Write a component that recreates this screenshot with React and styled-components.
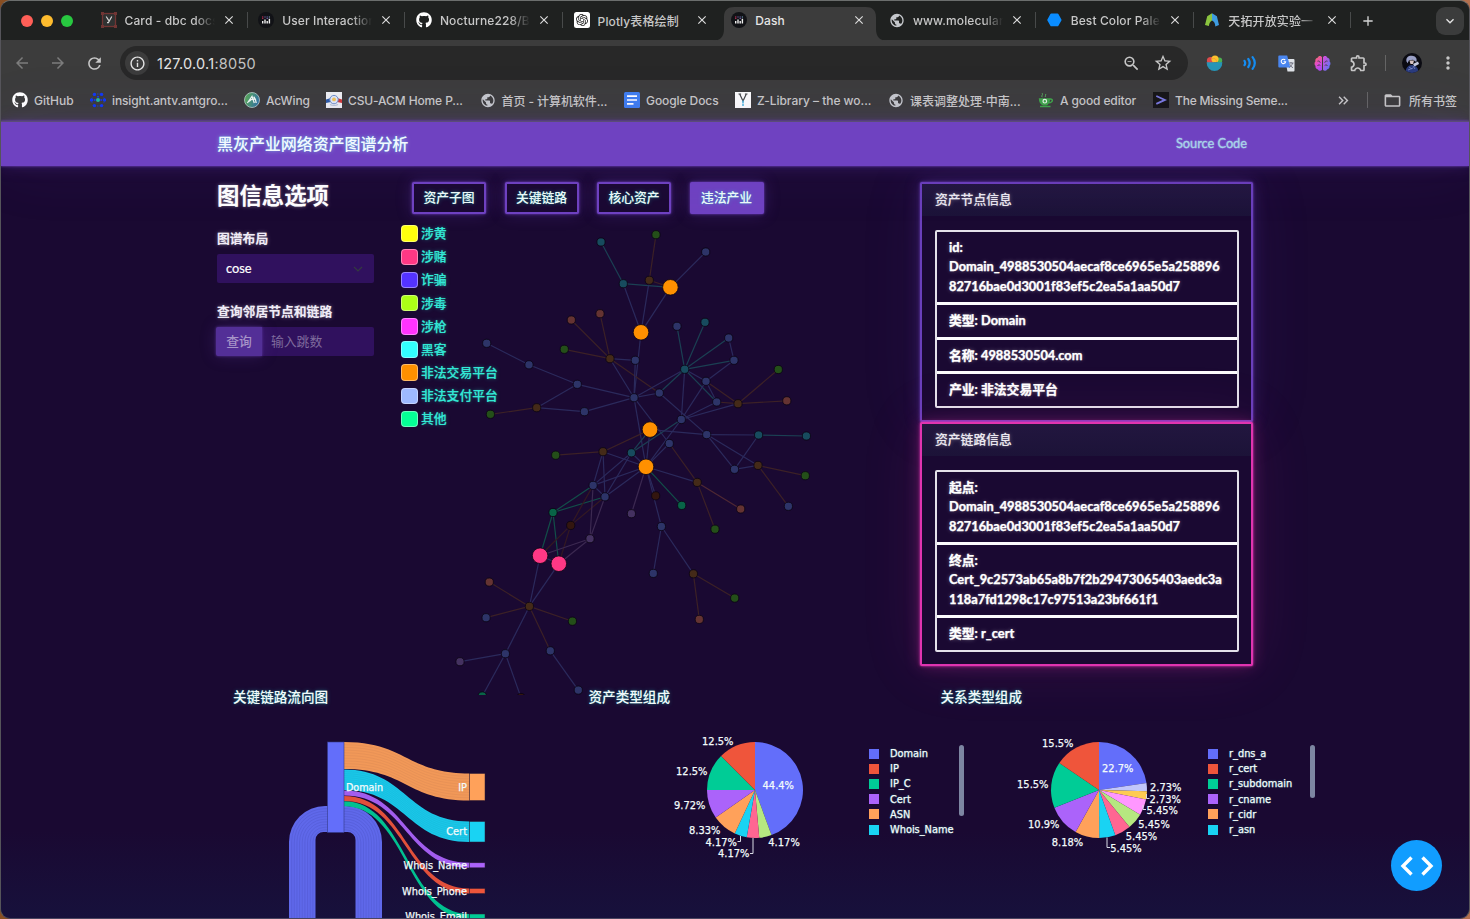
import React from 'react';
import styled, { createGlobalStyle, css } from 'styled-components';
import { FaGithub } from 'react-icons/fa';
import { SiOpenai } from 'react-icons/si';
import {
  MdArrowBack, MdArrowForward, MdRefresh, MdInfoOutline, MdZoomOut, MdStarBorder,
  MdOutlineExtension, MdMoreVert, MdClose, MdAdd, MdExpandMore, MdFolderOpen, MdPublic,
  MdKeyboardDoubleArrowRight,
} from 'react-icons/md';

const GlobalStyle = createGlobalStyle`
  *, *::before { box-sizing: border-box; }
  body { margin: 0; background: #2c211d; overflow: hidden; }
  button, input { font: inherit; }
`;

const uiFont = `Inter, "Noto Sans CJK SC", sans-serif`;
const pageFont = `Lato, "Noto Sans CJK SC", sans-serif`;

const Desktop = styled.div`
  width: 1470px;
  height: 919px;
  background: linear-gradient(90deg, #8a4f22, #3b2a22 30%, #3b2a22 70%, #b5704e);
`;

const Window = styled.div`
  position: relative;
  width: 1470px;
  height: 919px;
  display: flex;
  flex-direction: column;
  overflow: hidden;
  border: 1px solid #6b6e6d;
  border-color: #6b6e6d #55545a #4a4560 #55545a;
  border-radius: 10px;
  background: #3c3c3c;
  font-family: ${uiFont};
`;

/* ---------- browser chrome ---------- */

const TabStrip = styled.div`
  height: 39px;
  flex: none;
  display: flex;
  align-items: center;
  background: #1f2120;
`;

const Lights = styled.div`
  width: 91px;
  flex: none;
  padding-left: 20px;
  display: flex;
  gap: 8px;
`;

const Light = styled.i`
  width: 12px;
  height: 12px;
  border-radius: 50%;
  background: ${(p) => p.$color};
`;

const Tab = styled.div`
  position: relative;
  width: 157.7px;
  flex: none;
  height: 39px;
  padding: 0 0 1px 8.500px;
  display: flex;
  align-items: center;
  color: #c7c7c7;
  font-size: 12px;
  font-weight: 500;
`;

const TabShape = styled.svg`
  position: absolute;
  left: -11px;
  top: 5px;
  z-index: 0;
`;

const Favicon = styled.span`
  position: relative;
  width: 16px;
  height: 16px;
  flex: none;
  display: flex;
  align-items: center;
  justify-content: center;
`;

const TabTitle = styled.span`
  position: relative;
  width: 92px;
  margin-left: 8px;
  letter-spacing: 0.12px;
  overflow: hidden;
  white-space: nowrap;
  ${(p) => p.$fade && css`mask-image: linear-gradient(90deg, #000 70px, transparent 90px);`}
  ${(p) => p.$active && css`color: #e6e6e6;`}
`;

const TabClose = styled.span`
  position: relative;
  margin-left: 5px;
  display: flex;
  color: #dcdcdc;
`;

const TabDivider = styled.i`
  width: 1px;
  height: 16px;
  margin-left: 11px;
  background: #484a4a;
`;

const NewTab = styled.span`
  display: flex;
  margin-left: 6px;
  color: #d5d5d5;
`;

const TabSearch = styled.span`
  width: 28px;
  height: 28px;
  margin: 0 5px 0 auto;
  border-radius: 9px;
  background: #3b3c3c;
  color: #e3e3e3;
  display: flex;
  align-items: center;
  justify-content: center;
`;

const Toolbar = styled.div`
  height: 46px;
  flex: none;
  display: flex;
  align-items: center;
  padding-left: 11px;
  color: #c7c7c7;
`;

const ToolSlot = styled.span`
  width: ${(p) => p.$w}px;
  height: 24px;
  flex: none;
  display: flex;
  align-items: center;
  justify-content: center;
  color: ${(p) => p.$color || '#c7c7c7'};
`;

const NavButtons = styled.div`
  width: 108px;
  display: flex;
  gap: 16px;
`;

const Omnibox = styled.div`
  width: 1068px;
  height: 34px;
  padding: 0 7px 0 5px;
  display: flex;
  align-items: center;
  border-radius: 17px;
  background: #282828;
  color: #e3e3e3;
  font-size: 14.5px;
`;

const SiteInfo = styled.span`
  width: 24px;
  height: 24px;
  border-radius: 50%;
  background: #3c3c3c;
  display: flex;
  align-items: center;
  justify-content: center;
`;

const Url = styled.span`
  margin-left: 8px;
  flex: 1;
  letter-spacing: 0.25px;
  span { color: #c3c3c3; }
`;

const Extensions = styled.div`
  margin-left: 8px;
  display: flex;
  align-items: center;
`;

const Avatar = styled.span`
  width: 20px;
  height: 20px;
  border-radius: 50%;
  overflow: hidden;
  display: flex;
`;

const VRule = styled.i`
  width: 1px;
  height: 16px;
  background: #656565;
`;

const Bookmarks = styled.div`
  height: 35px;
  flex: none;
  display: flex;
  align-items: center;
  padding: 0 0 7px 11px;
  color: #c7c7c7;
  font-size: 12px;
  font-weight: 500;
`;

const Bookmark = styled.span`
  width: ${(p) => p.$w}px;
  flex: none;
  display: flex;
  align-items: center;
  gap: 6px;
  white-space: nowrap;
  letter-spacing: ${(p) => p.$ls || 0}px;
`;

const Overflow = styled.span`
  margin-left: 34px;
  display: flex;
`;

const AllBookmarks = styled.span`
  margin-left: 1px;
  display: flex;
  align-items: center;
  gap: 7px;
`;

/* ---------- page ---------- */

const Page = styled.div`
  flex: 1;
  display: flex;
  flex-direction: column;
  font-family: ${pageFont};
  font-size: 12.8px;
  line-height: 19.2px;
  color: #fff;
  background: linear-gradient(180deg, #1a0932 0, #1a0932 710px, #17113c 798px);
`;

const Navbar = styled.header`
  position: relative;
  height: 45px;
  flex: none;
  display: flex;
  align-items: center;
  justify-content: space-between;
  padding: 0 222px 0 216px;
  border-top: 1px solid #5b4c78;
  background: #6f42c1;
  box-shadow: 0 0 2px rgba(111, 66, 193, 0.9), 0 0 4px rgba(111, 66, 193, 0.4),
    0 0 16px rgba(111, 66, 193, 0.3), 0 0 64px rgba(111, 66, 193, 0.1);
`;

const Brand = styled.h1`
  margin: 0;
  font-size: 16px;
  font-weight: 500;
  letter-spacing: -0.06px;
  color: #f4f8ff;
  text-shadow: 0 0 1px rgba(50, 251, 226, 0.5), 0 0 4px rgba(160, 230, 255, 0.6);
`;

const SourceLink = styled.a`
  color: #a9d3ea;
  letter-spacing: -0.03px;
  -webkit-text-stroke: 0.3px #a9d3ea;
  text-shadow: 0 0 2px rgba(169, 211, 234, 0.6);
`;

const Main = styled.main`
  height: 514px;
  flex: none;
  display: grid;
  grid-template-columns: 184px 519px 333px;
  padding: 16px 0 0 216px;
`;

const glow = css`text-shadow: 0 0 1px rgba(255, 255, 255, 0.4), 0 0 4px rgba(255, 255, 255, 0.35);`;

const Options = styled.section`
  width: 157px;
`;

const OptionsTitle = styled.h2`
  margin: 0;
  font-size: 22.4px;
  line-height: 28px;
  font-weight: 700;
  ${glow}
`;

const FieldLabel = styled.label`
  display: block;
  margin-top: ${(p) => p.$top}px;
  font-weight: 700;
  white-space: nowrap;
  color: #f0ecf7;
  ${glow}
`;

const Select = styled.div`
  height: 29px;
  margin-top: 6px;
  padding: 0 11px 0 9px;
  display: flex;
  align-items: center;
  justify-content: space-between;
  border-radius: 2px;
  background: #30115e;
  -webkit-text-stroke: 0.2px #fff;
`;

const InputGroup = styled.div`
  height: 29px;
  margin-top: 6px;
  display: flex;
  border-radius: 2px;
  background: #30115e;
`;

const QueryButton = styled.button`
  width: 46px;
  margin-left: -1px;
  padding: 0;
  border: 0;
  border-radius: 2px 0 0 2px;
  background: #532f97;
  color: #a795c8;
  font-weight: 500;
  box-shadow: 0 0 3px rgba(111, 66, 193, 0.7), 0 0 16px rgba(111, 66, 193, 0.25);
`;

const HopInput = styled.input`
  width: 111px;
  padding: 0 9px;
  border: 0;
  background: transparent;
  &::placeholder { color: #7f6b9d; opacity: 1; }
`;

const GraphArea = styled.section`
  display: flex;
  flex-direction: column;
`;

const ButtonRow = styled.div`
  display: flex;
  gap: 18.5px;
  margin: 0 0 7px 11px;
`;

const ViewButton = styled.button`
  width: 74px;
  height: 32px;
  padding: 0;
  border: 2px solid #6f42c1;
  border-radius: 2px;
  background: ${(p) => (p.$active ? '#6f42c1' : '#1a0932')};
  color: #eefaf8;
  font-weight: 500;
  text-shadow: 0 0 1px rgba(50, 251, 226, 0.5), 0 0 4px rgba(50, 251, 226, 0.35);
  box-shadow: 0 0 2px rgba(111, 66, 193, 0.9), 0 0 4px rgba(111, 66, 193, 0.4),
    0 0 16px rgba(111, 66, 193, 0.3);
`;

const GraphStage = styled.div`
  position: relative;
  height: 459px;
`;

const GraphSvg = styled.svg`
  display: block;
`;

const CategoryLegend = styled.ul`
  position: absolute;
  left: 0;
  top: 1px;
  margin: 0;
  padding: 0;
  list-style: none;
`;

const Category = styled.li`
  height: 23.2px;
  display: flex;
  align-items: center;
  gap: 3.5px;
  font-weight: 500;
  color: #32e8d5;
  text-shadow: 0 0 1px rgba(50, 251, 226, 0.5), 0 0 4px rgba(50, 251, 226, 0.35);
  white-space: nowrap;
  &::before {
    content: '';
    width: 16.5px;
    height: 16.5px;
    border-radius: 4px;
    border: 1px solid rgba(255, 255, 255, 0.4);
    background: ${(p) => p.$color};
  }
`;

const InfoColumn = styled.aside`
  display: flex;
  flex-direction: column;
`;

const InfoCard = styled.section`
  height: ${(p) => p.$h}px;
  flex: none;
  border: 2px solid ${(p) => (p.$pink ? '#e034b0' : '#6a3fbb')};
  border-radius: 2px;
  background: #1a0932;
  box-shadow: ${(p) => (p.$pink
    ? '0 0 2px rgba(234,57,184,.9), 0 0 4px rgba(234,57,184,.4), 0 0 16px rgba(234,57,184,.3), 0 0 64px rgba(234,57,184,.1)'
    : '0 0 2px rgba(111,66,193,.9), 0 0 4px rgba(111,66,193,.4), 0 0 16px rgba(111,66,193,.3), 0 0 64px rgba(111,66,193,.1)')};
`;

const CardHeader = styled.header`
  height: 32px;
  padding: 0 13px;
  display: flex;
  align-items: center;
  background: linear-gradient(180deg, #22163f, #1c1338);
  color: #ebe8f0;
  font-weight: 500;
  ${glow}
`;

const FactList = styled.ul`
  margin: 14px 12px 0 13px;
  padding: 0;
  list-style: none;
  border: 2px solid #e4e1ea;
  border-radius: 2px;
`;

const Fact = styled.li`
  padding: 6.2px 10px 6.2px 12px;
  font-weight: 700;
  white-space: pre-line;
  -webkit-text-stroke: 0.25px #fff;
  ${glow}
  & + & { border-top: 3px solid #fbfafc; }
`;

const Charts = styled.section`
  display: grid;
  grid-template-columns: 355.5px 352px 1fr;
  padding-left: 216px;
`;

const ChartPanel = styled.section`
  padding-left: 16px;
  padding-top: 7px;
`;

const ChartTitle = styled.h3`
  margin: 0;
  height: 20px;
  font-size: 13.6px;
  line-height: 20px;
  font-weight: 500;
  color: #f2f8fa;
  text-shadow: 0 0 1px rgba(50, 251, 226, 0.5), 0 0 4px rgba(50, 251, 226, 0.35);
`;

const PlotRow = styled.div`
  display: flex;
  padding-left: ${(p) => p.$left}px;
  padding-top: ${(p) => p.$top || 0}px;
`;

const PlotSvg = styled.svg`
  display: block;
  flex: none;
  text {
    font-family: "DejaVu Sans", sans-serif;
    fill: #f3fbfb;
    stroke: #f3fbfb;
    stroke-width: 0.25px;
  }
`;

const SeriesLegend = styled.ul`
  width: ${(p) => p.$w}px;
  flex: none;
  margin: 21px 0 0 ${(p) => p.$left}px;
  padding: 0;
  list-style: none;
`;

const Series = styled.li`
  height: 15.2px;
  display: flex;
  align-items: center;
  gap: 11px;
  font-family: "DejaVu Sans", sans-serif;
  font-size: 9.8px;
  color: #f3fbfb;
  -webkit-text-stroke: 0.25px #f3fbfb;
  text-shadow: 0 0 2px rgba(50, 251, 226, 0.4);
  &::before {
    content: '';
    width: 10px;
    height: 10px;
    background: ${(p) => p.$color};
  }
`;

const LegendScroll = styled.i`
  width: 5px;
  flex: none;
  height: ${(p) => p.$h}px;
  margin-top: 20px;
  border-radius: 3px;
  background: #7d86a2;
`;

const DevButton = styled.button`
  position: absolute;
  right: 27px;
  bottom: 27px;
  width: 51px;
  height: 51px;
  padding: 0;
  border: 0;
  border-radius: 50%;
  background: #119dff;
  display: flex;
  align-items: center;
  justify-content: center;
`;

/* ---------- icons ---------- */

const GlobeIcon = () => <MdPublic size={17} color="#c4c7cb" />;

const FrameIcon = () => (
  <svg width="16" height="16" viewBox="0 0 16 16">
    <rect x="1.5" y="1.5" width="13" height="13" fill="#303232" stroke="#713534" strokeWidth="1.3" />
    {[[0, 0], [13, 0], [0, 13], [13, 13]].map(([x, y]) => (
      <rect key={`${x}-${y}`} x={x} y={y} width="3" height="3" fill="#713534" />
    ))}
    <path d="M5.2 4.5 7.8 8.6M10.8 4.5 7.4 10.6H6" stroke="#d0d0d0" strokeWidth="1.2" fill="none" />
  </svg>
);

const DashIcon = () => (
  <svg width="16" height="16" viewBox="0 0 16 16">
    <circle cx="8" cy="8" r="8" fill="#111216" />
    <path d="M4.7 11.6V9M7 11.6V7.5M9.2 11.6V9M11.4 11.6V6.8" stroke="#eee" strokeWidth="1.4" />
    <path d="M4.7 4.4v2.4" stroke="#db3660" strokeWidth="1.3" strokeDasharray="1 .6" />
    <path d="M7 4.4v1.6M9.2 4.4v2.6" stroke="#7c6eb8" strokeWidth="1.2" strokeDasharray="1 .6" />
    <path d="M11.4 4.4v1" stroke="#78a8c8" strokeWidth="1.2" />
  </svg>
);

const ChatIcon = () => (
  <svg width="16" height="16" viewBox="0 0 16 16">
    <rect width="16" height="16" rx="2.5" fill="#fff" />
    <SiOpenai x="2" y="2" size={12} color="#1b1b1b" />
  </svg>
);

const HexIcon = () => (
  <svg width="15" height="14" viewBox="0 0 15 14">
    <path d="M4.3.6h6.2a1 1 0 0 1 .9.5l3 5.3a1 1 0 0 1 0 1l-3 5.4a1 1 0 0 1-.9.5H4.3a1 1 0 0 1-.9-.5l-3-5.4a1 1 0 0 1 0-1l3-5.3a1 1 0 0 1 .9-.5Z" fill="#0a8cff" />
  </svg>
);

const GateIcon = () => (
  <svg width="16" height="16" viewBox="0 0 16 16">
    <path d="M8 1.2v7.3C6 9.5 5.2 11.4 4.9 14L1 13l2.2-8.8Z" fill="#8bc53f" />
    <path d="M8 1.2 12.900 4.200 15 13l-3.700 1.400C11.200 11.600 10.300 9.400 8 8.500Z" fill="#3e9ce0" />
  </svg>
);

const AntvIcon = () => (
  <svg width="16" height="16" viewBox="0 0 16 16">
    <path d="M4.5 2h7M2.2 5.5.9 8l1.3 2.8M13.8 5.5 15.1 8l-1.3 2.8M4.5 14h7" stroke="#1740d8" strokeWidth=".8" fill="none" strokeDasharray="1.5 1" />
    {[[4.4, 2.4], [11.6, 2.4], [1.6, 8], [14.4, 8], [4.4, 13.6], [11.6, 13.6]].map(([x, y]) => (
      <circle key={`${x}-${y}`} cx={x} cy={y} r="1.7" fill="#1138f5" />
    ))}
    <circle cx="8" cy="8" r="2" fill="#22b89a" />
    <circle cx="8" cy="4.8" r="1" fill="#1138f5" />
    <circle cx="4.7" cy="8" r="1" fill="#1138f5" />
    <circle cx="11.2" cy="8" r="1" fill="#1138f5" />
  </svg>
);

const AcwingIcon = () => (
  <svg width="16" height="16" viewBox="0 0 16 16">
    <defs>
      <linearGradient id="acw" x1="0" y1="0" x2="1" y2="0.3">
        <stop offset="0" stopColor="#5db04b" />
        <stop offset="1" stopColor="#34779f" />
      </linearGradient>
    </defs>
    <circle cx="8" cy="8" r="7.5" fill="url(#acw)" stroke="#b9cfca" strokeWidth=".8" />
    <path d="M3.4 11 8 4.4l2.3 6.6M5.3 9.2C7.6 6.9 10.4 6.6 11.8 8M9.6 4.8c1.5 1.4 2.4 3.8 2.6 6.2" fill="none" stroke="#eef6f2" strokeWidth="1.3" />
  </svg>
);

const AcmIcon = () => (
  <svg width="16" height="16" viewBox="0 0 16 16">
    <rect width="16" height="16" fill="#eceef2" />
    <path d="M0 7.5 5 6v4L0 11Z" fill="#2c5aa6" />
    <path d="M16 7.5 11 6v4l5 1Z" fill="#cf3a3a" />
    <circle cx="8" cy="7.6" r="4.2" fill="#dfe7f4" stroke="#6c8fc9" strokeWidth="1" />
    <circle cx="8" cy="7.4" r="1.9" fill="#f0c258" />
    <path d="M4 12.4c2.5 1.3 5.5 1.3 8 0" fill="none" stroke="#b2bfd6" strokeWidth="1.1" />
  </svg>
);

const DocsIcon = () => (
  <svg width="16" height="16" viewBox="0 0 16 16">
    <rect width="16" height="16" rx="1.5" fill="#3f7ef0" />
    <path d="M3 4.2h10M3 8h10M3 11.8h6.5" stroke="#fff" strokeWidth="1.7" />
  </svg>
);

const ZlibIcon = () => (
  <svg width="16" height="16" viewBox="0 0 16 16">
    <rect width="16" height="16" fill="#fbfbfb" />
    <path d="M3.5 2h2.6M9.9 2h2.6M4.7 2l3.3 7 3.3-7" stroke="#45484a" strokeWidth="1.2" fill="none" />
    <path d="M8 8.5v6" stroke="#4ab2dc" strokeWidth="1.5" strokeDasharray="2.5 .6" />
  </svg>
);

const TeaIcon = () => (
  <svg width="16" height="16" viewBox="0 0 16 16">
    <path d="M.8 6.2h11.4c0 4-2 6.6-3.7 7.3H5C2.5 12.7.8 10 .8 6.2Z" fill="#3fa548" />
    <path d="M11.8 7.2c3.5-1 3.5 3.3-1 3.6" fill="none" stroke="#3fa548" strokeWidth="1.5" />
    <path d="M2 14.6h10.5" stroke="#3fa548" strokeWidth="1.5" />
    <path d="M4.2 5.2c-1.6-1.9 1.4-2 0-4M7.5 5c-1-1.3 1-1.7 0-3" fill="none" stroke="#57ad5d" strokeWidth="1" />
    <circle cx="6.8" cy="9.2" r="1.8" fill="none" stroke="#e4f4e4" strokeWidth="1.2" />
  </svg>
);

const ShellIcon = () => (
  <svg width="16" height="16" viewBox="0 0 16 16">
    <rect width="16" height="16" fill="#161616" />
    <path d="m3.3 4 8.6 3.9-8.6 4" fill="none" stroke="#7878dc" strokeWidth="1.8" />
  </svg>
);

const BowlIcon = () => (
  <svg width="17" height="17" viewBox="0 0 17 17">
    <circle cx="4.6" cy="5.8" r="3.7" fill="#dd4b4b" />
    <circle cx="13.3" cy="5.5" r="2.9" fill="#4caf50" />
    <circle cx="9" cy="4" r="3.6" fill="#fbc02d" />
    <path d="M6 3.8a3 3 0 0 1 4.5 3" fill="none" stroke="#ef9a32" strokeWidth=".8" />
    <path d="M.6 7.3h15.8a7.9 8.6 0 0 1-15.8 0Z" fill="#2795b6" />
  </svg>
);

const SoundIcon = () => (
  <svg width="14" height="14" viewBox="0 0 14 14" fill="none" stroke="#158cf0" strokeWidth="2.2" strokeLinecap="round">
    <path d="M1.5 4.8c.9 1.4.9 3 0 4.4M5.3 3c1.8 2.6 1.8 5.4 0 8M9.6 1.200c2.900 3.800 2.900 7.800 0 11.600" />
  </svg>
);

const TranslateIcon = () => (
  <svg width="17" height="17" viewBox="0 0 17 17">
    <path d="M7 4h8.5a1 1 0 0 1 1 1v10.5a1 1 0 0 1-1 1H9.5Z" fill="#dfe3e8" />
    <path d="M10.5 8h5M13 7v1M14.6 8c-.6 2.2-2 3.7-3.6 4.5M11.6 9c.8 2 2 3 3.4 3.7" stroke="#667" strokeWidth=".9" fill="none" />
    <path d="M1.2.6h8l3 11.8h-11a.9.9 0 0 1-.9-.9V1.5a.9.9 0 0 1 .9-.9Z" fill="#4a86ef" />
    <path d="M7.2 5.1A2.2 2.2 0 1 0 7.6 6.8H5.6" fill="none" stroke="#fff" strokeWidth="1.1" />
  </svg>
);

const BrainIcon = () => (
  <svg width="17" height="17" viewBox="0 0 17 17">
    <defs>
      <linearGradient id="brainL" x1="0" y1="0" x2=".4" y2="1">
        <stop offset="0" stopColor="#f9734f" />
        <stop offset=".6" stopColor="#e04ad0" />
        <stop offset="1" stopColor="#b04af0" />
      </linearGradient>
      <linearGradient id="brainR" x1="0" y1="0" x2="1" y2="1">
        <stop offset="0" stopColor="#e04ad8" />
        <stop offset="1" stopColor="#4a7cf8" />
      </linearGradient>
    </defs>
    <path d="M8 2.2C7 .3 4.3.6 3.6 2.7 1.5 3 .9 5 1.5 6.2c-1.3 1.2-1.3 3.6 0 4.6-.4 2 .9 3.5 2.5 3.6.8 1.8 3.2 1.9 4 .3Z" fill="url(#brainL)" />
    <path d="M9 2.2c1-1.9 3.7-1.6 4.4.5 2.1.3 2.7 2.3 2.1 3.5 1.3 1.2 1.3 3.6 0 4.6.4 2-.9 3.5-2.5 3.6-.8 1.8-3.2 1.9-4 .3Z" fill="url(#brainR)" />
    <path d="M3.5 6.2c1.5-.5 2.5.2 2.7 1.5M3.3 11c.8-1.2 2-1.3 3-.6M13.5 6.2c-1.5-.5-2.5.2-2.7 1.5M13.7 11c-.8-1.2-2-1.3-3-.6" fill="none" stroke="#3c3c3c" strokeWidth=".9" />
  </svg>
);

const AvatarArt = () => (
  <svg width="20" height="20" viewBox="0 0 20 20">
    <rect width="20" height="20" fill="#0b0b12" />
    <path d="M4.5 8.500C3.500 4 7.500 2 11 3c3.300.6 4.300 3.200 3.300 6l-3.300-2.200-4 .5-1.500 3Z" fill="#9aa0c6" />
    <path d="M7.5 7.5h4.500l-1 3.500H8.500Z" fill="#d8c3c2" />
    <path d="M3.500 20c0-5 2.500-8 6.500-8s6.500 3 6.500 8Z" fill="#2b3c7e" />
    <path d="M11 11l5-2.500 1 2.500-4.500 2.500Z" fill="#c6cadf" />
    <path d="M7 14l3 2M6 17l5-2M11 13l2 3" stroke="#7f8dcc" strokeWidth=".8" />
  </svg>
);

/* ---------- data ---------- */

const tabs = [
  { title: 'Card - dbc docs', icon: <FrameIcon />, fade: true },
  { title: 'User Interaction', icon: <DashIcon />, fade: true },
  { title: 'Nocturne228/B', icon: <FaGithub size={16} color="#fff" />, fade: true },
  { title: 'Plotly表格绘制', icon: <ChatIcon />, noDivider: true },
  { title: 'Dash', icon: <DashIcon />, active: true, noDivider: true },
  { title: 'www.molecular', icon: <GlobeIcon />, fade: true },
  { title: 'Best Color Pale', icon: <HexIcon />, fade: true },
  { title: '天拓开放实验一', icon: <GateIcon />, fade: true },
];

const bookmarks = [
  { label: 'GitHub', w: 78, icon: <FaGithub size={16} color="#fff" /> },
  { label: 'insight.antv.antgro...', w: 154, ls: -0.12, icon: <AntvIcon /> },
  { label: 'AcWing', w: 82, ls: -0.1, icon: <AcwingIcon /> },
  { label: 'CSU-ACM Home P...', w: 153.5, ls: -0.12, icon: <AcmIcon /> },
  { label: '首页 - 计算机软件...', w: 144.5, ls: -0.08, icon: <GlobeIcon /> },
  { label: 'Google Docs', w: 111, ls: -0.08, icon: <DocsIcon /> },
  { label: 'Z-Library – the wo...', w: 153, ls: -0.03, icon: <ZlibIcon /> },
  { label: '课表调整处理·中南...', w: 150, icon: <GlobeIcon /> },
  { label: 'A good editor', w: 115, ls: -0.12, icon: <TeaIcon /> },
  { label: 'The Missing Seme...', w: 148, ls: -0.2, icon: <ShellIcon /> },
];

const categories = [
  ['涉黄', '#ffff0d'], ['涉赌', '#ff3885'], ['诈骗', '#5433ff'],
  ['涉毒', '#adff17'], ['涉枪', '#ff33ff'], ['黑客', '#33ffff'],
  ['非法交易平台', '#ff9000'], ['非法支付平台', '#9eb8ff'], ['其他', '#05ff96'],
];

const nodeFill = {
  blue: '#2d3468', teal: '#174b5e', green: '#244f19', brown: '#442a18', red: '#643332',
  emerald: '#086447', dark: '#33160f', purple: '#443160', orange: '#ff9000', pink: '#ff3885',
};
const edgeStroke = {
  b: '#2b2a5c', t: '#1b4053', o: '#3c2126', g: '#124f49', d: '#341922', p: '#3c2951', r: '#4f2833',
};

const nodes = {
  a1: [601, 242, 'teal'], a2: [656, 234.7, 'green'], a3: [705.7, 252, 'blue'],
  a4: [623.3, 283.7, 'teal'], a5: [649.3, 280.3, 'brown'], A: [670.4, 287.3, 'orange'],
  B: [641, 332.3, 'orange'], b1: [571.3, 320, 'red'], b2: [600, 313.7, 'red'],
  b3: [564.3, 349.3, 'green'], b4: [610, 358.7, 'brown'], b5: [635.3, 360.3, 'blue'],
  c1: [677, 326.3, 'blue'], c2: [705, 322.3, 'teal'], c3: [728.7, 338, 'blue'],
  c4: [734, 360.3, 'blue'], c5: [684.7, 369.3, 'teal'], c6: [706, 381.3, 'blue'],
  c7: [778.3, 369.5, 'green'], c8: [716.7, 402, 'blue'], c9: [738, 403.7, 'brown'],
  c10: [786.8, 400.8, 'red'], d1: [486.7, 343.3, 'blue'], d2: [529, 364.8, 'blue'],
  d3: [577.3, 384.3, 'blue'], d4: [634, 397.7, 'blue'], d5: [659.3, 393, 'blue'],
  d6: [536.7, 407.7, 'brown'], d7: [490.4, 414.3, 'green'], d8: [584.4, 411.7, 'blue'],
  e1: [681.3, 419.5, 'blue'], C: [650, 429.6, 'orange'], e2: [706.7, 434.6, 'blue'],
  e3: [758.6, 435, 'teal'], e4: [806.4, 436, 'teal'], f1: [555.7, 455.2, 'green'],
  f2: [603, 451.7, 'brown'], f3: [631.4, 452.8, 'teal'], f4: [669.3, 443.5, 'blue'],
  D: [646, 466.8, 'orange'], g1: [734.5, 469.3, 'blue'], g2: [758, 465.4, 'brown'],
  g3: [805.3, 475.7, 'green'], g4: [788.4, 506.3, 'blue'], h1: [593.1, 485.4, 'blue'],
  h2: [605, 496.8, 'blue'], h3: [553, 512.5, 'emerald'], h4: [570.7, 525.4, 'dark'],
  h5: [590, 538.7, 'purple'], h6: [631.4, 513.7, 'purple'], h7: [655.7, 495.8, 'dark'],
  h8: [681.7, 505.4, 'emerald'], h9: [697.2, 482.4, 'brown'], i1: [740.7, 509, 'red'],
  i2: [715, 529.2, 'green'], i3: [661.4, 526.5, 'blue'], i4: [653.3, 573.4, 'blue'],
  i5: [693.4, 573.8, 'brown'], i6: [734.7, 598.1, 'green'], i7: [699.3, 619.4, 'red'],
  P: [540.1, 555.7, 'pink'], Q: [558.8, 563.7, 'pink'], j1: [489.3, 582.1, 'red'],
  j2: [529.4, 606.4, 'brown'], j3: [486.1, 617.7, 'blue'], j4: [572.4, 621.2, 'green'],
  j5: [505.4, 653.7, 'blue'], j6: [460, 661.7, 'purple'], j7: [550.3, 650.8, 'blue'],
  j8: [578.3, 690.1, 'blue'], j9: [482.3, 696, 'emerald'], j10: [521, 697.5, 'dark'],
};

const edges = `a1-a4-t a4-A-t a2-a5-o a5-A-o a5-B-b a4-B-b A-B-b a3-A-b B-d4-b b1-b4-o b2-b4-o b3-b4-o
b4-b5-b b4-d4-b b4-d5-o b5-d4-b c1-c5-t c2-c5-t c3-c5-t c4-c5-t c3-c4-b c4-c6-b c5-c6-b c5-c8-t c5-d4-b
c5-d5-t c5-e1-b c6-c8-b c6-c9-o c8-c9-o c9-c7-o c9-c10-o c6-e1-b c8-e1-b c9-e1-b d1-d2-b d2-d3-b
d3-d4-b d3-d6-b d6-d7-o d6-d8-b d8-d4-b d4-d5-b d4-D-b d4-f4-b d5-e2-b e1-D-b e1-f3-t C-f3-t C-e2-b
C-D-b C-f2-o e2-e3-b e3-e4-t e2-g1-b e2-g2-b g1-e3-b g1-g2-b g2-g3-o g2-g4-o f1-f2-o f2-D-b f3-D-b
f4-D-b f4-h9-o D-h9-b D-h8-g D-h7-b D-i3-b D-h6-p D-h1-b D-h2-b f2-h1-b f2-h2-b f3-h1-b f3-h2-b
h1-h2-b h1-h3-g h2-h3-g h1-h4-d h2-h4-d h1-h5-p h2-h5-p h3-P-g h3-Q-g h4-P-d h4-Q-d h5-P-p h5-Q-p
P-Q-b P-j2-b Q-j2-b h9-i1-r h9-i2-o i3-i4-b i3-i5-b i5-i6-o i5-i7-o j1-j2-o j2-j3-o j2-j4-o
j2-j5-b j2-j7-o j5-j6-b j5-j9-b j5-j10-b j7-j8-b`.split(/\s+/).map((e) => e.split('-'));

function AssetGraph() {
  return (
    <GraphSvg width="440" height="474" viewBox="401 221 440 474">
      {edges.map(([a, b, tone]) => (
        <line key={a + b} x1={nodes[a][0]} y1={nodes[a][1]} x2={nodes[b][0]} y2={nodes[b][1]}
          stroke={edgeStroke[tone]} strokeWidth="1.2" />
      ))}
      {Object.entries(nodes).map(([id, [x, y, kind]]) => {
        const big = kind === 'orange' || kind === 'pink';
        return (
          <circle key={id} cx={x} cy={y} r={big ? 7.8 : 4.1} fill={nodeFill[kind]}
            stroke="#0a0412" strokeWidth="0.8" />
        );
      })}
    </GraphSvg>
  );
}

const ribbon = (y0, y1, h) =>
  `M344 ${y0}C406.5 ${y0} 406.5 ${y1} 469.5 ${y1}V${y1 + h}C406.5 ${y1 + h} 406.5 ${y0 + h} 344 ${y0 + h}Z`;

const flows = [
  { name: 'IP', color: '#FFA15A', y0: 742, y1: 773.5, h: 27 },
  { name: 'Cert', color: '#19D3F3', y0: 769.5, y1: 821.5, h: 20.5 },
  { name: 'Whois_Name', color: '#AB63FA', y0: 790.5, y1: 862.8, h: 5 },
  { name: 'Whois_Phone', color: '#EF553B', y0: 796, y1: 888.5, h: 5 },
  { name: 'Whois_Email', color: '#00CC96', y0: 801.3, y1: 914, h: 5 },
];

function SankeyChart() {
  const strands = [];
  for (let i = 1; i < 10; i += 1) strands.push(i * 2.65);
  return (
    <PlotSvg width="210" height="184" viewBox="285 735 210 184">
      <path d="M327.5 806H325A36 36 0 0 0 289 842V925H315.5V840A8 8 0 0 1 323.5 832H347.5A8 8 0 0 1 355.5 840V925H382V842A36 36 0 0 0 346 806Z" fill="#5f68ea" />
      {strands.map((s) => (
        <path key={s} d={`M${289 + s} 925V842A${36 - s} ${36 - s} 0 0 1 325 ${806 + s}H346A${36 - s} ${36 - s} 0 0 1 ${382 - s} 842V925`}
          fill="none" stroke="#5059cf" strokeWidth=".5" />
      ))}
      {flows.slice().reverse().map((f) => (
        <path key={f.name} d={ribbon(f.y0, f.y1, f.h)} fill={f.color} opacity=".94" />
      ))}
      {flows.slice(0, 2).map((f) => strands.map((s) => {
        const k = (s / 26.5) * f.h;
        return (
          <path key={f.name + s} d={`M344 ${f.y0 + k}C406.5 ${f.y0 + k} 406.5 ${f.y1 + k} 469.5 ${f.y1 + k}`}
            fill="none" stroke="#1a0932" strokeOpacity=".09" strokeWidth=".5" />
        );
      }))}
      <rect x="327.5" y="742" width="16.5" height="90.5" fill="#636EFA" stroke="#343a85" strokeWidth=".6" />
      {flows.map((f) => (
        <rect key={f.name} x="469.5" y={f.y1} width="15.5" height={f.h} fill={f.color} stroke="#2d1c35" strokeWidth=".5" />
      ))}
      <text x="346" y="790.5" fontSize="9.6" textLength="37">Domain</text>
      {flows.map((f) => (
        <text key={f.name} x="467" y={f.y1 + f.h / 2 + 3.5} fontSize="9.8" textAnchor="end">{f.name}</text>
      ))}
    </PlotSvg>
  );
}

function Pie({ cx, cy, r, slices }) {
  let acc = 0;
  const total = slices.reduce((s, [v]) => s + v, 0);
  return slices.map(([v, color], i) => {
    const a0 = (acc / total) * Math.PI * 2;
    acc += v;
    const a1 = (acc / total) * Math.PI * 2;
    const d = `M${cx} ${cy}L${cx + r * Math.sin(a0)} ${cy - r * Math.cos(a0)}A${r} ${r} 0 ${a1 - a0 > Math.PI ? 1 : 0} 1 ${cx + r * Math.sin(a1)} ${cy - r * Math.cos(a1)}Z`;
    return <path key={i} d={d} fill={color} />;
  });
}

function PieChart({ x, labels, leaders, ...pie }) {
  return (
    <PlotSvg width="190" height="136" viewBox={`${x} 725 190 136`}>
      <Pie {...pie} />
      <path d={leaders} fill="none" stroke="#d9dbe6" strokeWidth="1" />
      {labels.map(([text, lx, ly], i) => (
        <text key={i} x={lx} y={ly + 3.6} fontSize="9.9" textLength="31.5">{text}</text>
      ))}
    </PlotSvg>
  );
}

const assetSlices = [
  [44.4, '#636EFA'], [4.17, '#B6E880'], [4.17, '#FF6692'], [4.17, '#19D3F3'],
  [8.33, '#FFA15A'], [9.72, '#AB63FA'], [12.5, '#00CC96'], [12.5, '#EF553B'],
];
const assetLabels = [
  ['44.4%', 762.5, 785.8], ['12.5%', 702, 741], ['12.5%', 676, 771], ['9.72%', 674, 805],
  ['8.33%', 689, 830.3], ['4.17%', 705.5, 842], ['4.17%', 718, 853.4], ['4.17%', 768.3, 842.5],
];
const relationSlices = [
  [22.7, '#636EFA'], [2.73, '#C1C6FB'], [2.73, '#FECB52'], [5.45, '#FF97FF'],
  [5.45, '#B6E880'], [5.45, '#FF6692'], [5.45, '#19D3F3'], [8.18, '#FFA15A'],
  [10.9, '#AB63FA'], [15.5, '#00CC96'], [15.5, '#EF553B'],
];
const relationLabels = [
  ['22.7%', 1102, 768.5], ['15.5%', 1042, 743.5], ['15.5%', 1017, 784.5], ['10.9%', 1028, 824],
  ['8.18%', 1051.7, 842], ['2.73%', 1150, 787.4], ['2.73%', 1149.5, 799], ['5.45%', 1146.5, 810.7],
  ['5.45%', 1138.3, 824], ['5.45%', 1125.7, 836.5], ['5.45%', 1110.2, 848],
];

const assetLegend = [
  ['Domain', '#636EFA'], ['IP', '#EF553B'], ['IP_C', '#00CC96'],
  ['Cert', '#AB63FA'], ['ASN', '#FFA15A'], ['Whois_Name', '#19D3F3'],
];
const relationLegend = [
  ['r_dns_a', '#636EFA'], ['r_cert', '#EF553B'], ['r_subdomain', '#00CC96'],
  ['r_cname', '#AB63FA'], ['r_cidr', '#FFA15A'], ['r_asn', '#19D3F3'],
];

function BrowserTab({ tab }) {
  return (
    <Tab>
      {tab.active && (
        <TabShape width="176" height="35" viewBox="0 0 176 35">
          <path d="M0 35C8 35 12 31 12 23V11C12 4 16 1 22 1H154C160 1 164 4 164 11V23C164 31 168 35 176 35Z" fill="#3c3c3c" />
        </TabShape>
      )}
      <Favicon>{tab.icon}</Favicon>
      <TabTitle $fade={tab.fade} $active={tab.active}>{tab.title}</TabTitle>
      <TabClose><MdClose size={14} /></TabClose>
      {!tab.noDivider && <TabDivider />}
    </Tab>
  );
}

function Chrome() {
  return (
    <>
      <TabStrip>
        <Lights>
          <Light $color="#ff5f57" /><Light $color="#febc2e" /><Light $color="#28c840" />
        </Lights>
        {tabs.map((t) => <BrowserTab key={t.title} tab={t} />)}
        <NewTab><MdAdd size={16} /></NewTab>
        <TabSearch><MdExpandMore size={16} /></TabSearch>
      </TabStrip>
      <Toolbar>
        <NavButtons>
          <ToolSlot $w={20} $color="#7c7c7c"><MdArrowBack size={18} /></ToolSlot>
          <ToolSlot $w={20} $color="#7c7c7c"><MdArrowForward size={18} /></ToolSlot>
          <ToolSlot $w={20}><MdRefresh size={19} /></ToolSlot>
        </NavButtons>
        <Omnibox>
          <SiteInfo><MdInfoOutline size={17} /></SiteInfo>
          <Url>127.0.0.1<span>:8050</span></Url>
          <ToolSlot $w={28}><MdZoomOut size={19} /></ToolSlot>
          <ToolSlot $w={36}><MdStarBorder size={20} /></ToolSlot>
        </Omnibox>
        <Extensions>
          <ToolSlot $w={36}><BowlIcon /></ToolSlot>
          <ToolSlot $w={36}><SoundIcon /></ToolSlot>
          <ToolSlot $w={36}><TranslateIcon /></ToolSlot>
          <ToolSlot $w={36}><BrainIcon /></ToolSlot>
          <ToolSlot $w={37}><MdOutlineExtension size={20} /></ToolSlot>
          <ToolSlot $w={17}><VRule /></ToolSlot>
          <ToolSlot $w={36}><Avatar><AvatarArt /></Avatar></ToolSlot>
          <ToolSlot $w={36}><MdMoreVert size={20} /></ToolSlot>
        </Extensions>
      </Toolbar>
      <Bookmarks>
        {bookmarks.map((b) => (
          <Bookmark key={b.label} $w={b.w} $ls={b.ls}><Favicon>{b.icon}</Favicon>{b.label}</Bookmark>
        ))}
        <Overflow><MdKeyboardDoubleArrowRight size={17} /></Overflow>
        <ToolSlot $w={30}><VRule /></ToolSlot>
        <AllBookmarks><MdFolderOpen size={19} />所有书签</AllBookmarks>
      </Bookmarks>
    </>
  );
}

export default function App() {
  return (
    <Desktop>
      <GlobalStyle />
      <Window>
        <Chrome />
        <Page>
          <Navbar>
            <Brand>黑灰产业网络资产图谱分析</Brand>
            <SourceLink>Source Code</SourceLink>
          </Navbar>
          <Main>
            <Options>
              <OptionsTitle>图信息选项</OptionsTitle>
              <FieldLabel $top={19}>图谱布局</FieldLabel>
              <Select>
                cose
                <svg width="10" height="6" viewBox="0 0 10 6"><path d="m1 1 4 4 4-4" fill="none" stroke="#343a40" strokeWidth="1.2" /></svg>
              </Select>
              <FieldLabel $top={19}>查询邻居节点和链路</FieldLabel>
              <InputGroup>
                <QueryButton>查询</QueryButton>
                <HopInput placeholder="输入跳数" />
              </InputGroup>
            </Options>
            <GraphArea>
              <ButtonRow>
                <ViewButton>资产子图</ViewButton>
                <ViewButton>关键链路</ViewButton>
                <ViewButton>核心资产</ViewButton>
                <ViewButton $active>违法产业</ViewButton>
              </ButtonRow>
              <GraphStage>
                <AssetGraph />
                <CategoryLegend>
                  {categories.map(([name, color]) => <Category key={name} $color={color}>{name}</Category>)}
                </CategoryLegend>
              </GraphStage>
            </GraphArea>
            <InfoColumn>
              <InfoCard $h={240}>
                <CardHeader>资产节点信息</CardHeader>
                <FactList>
                  <Fact>{'id:\nDomain_4988530504aecaf8ce6965e5a258896\n82716bae0d3001f83ef5c2ea5a1aa50d7'}</Fact>
                  <Fact>类型: Domain</Fact>
                  <Fact>名称: 4988530504.com</Fact>
                  <Fact>产业: 非法交易平台</Fact>
                </FactList>
              </InfoCard>
              <InfoCard $pink $h={244}>
                <CardHeader>资产链路信息</CardHeader>
                <FactList>
                  <Fact>{'起点:\nDomain_4988530504aecaf8ce6965e5a258896\n82716bae0d3001f83ef5c2ea5a1aa50d7'}</Fact>
                  <Fact>{'终点:\nCert_9c2573ab65a8b7f2b29473065403aedc3a\n118a7fd1298c17c97513a23bf661f1'}</Fact>
                  <Fact>类型: r_cert</Fact>
                </FactList>
              </InfoCard>
            </InfoColumn>
          </Main>
          <Charts>
            <ChartPanel>
              <ChartTitle>关键链路流向图</ChartTitle>
              <PlotRow $left={52} $top={28}><SankeyChart /></PlotRow>
            </ChartPanel>
            <ChartPanel>
              <ChartTitle>资产类型组成</ChartTitle>
              <PlotRow $left={71.5} $top={18}>
                <PieChart x={660} cx={755} cy={790} r={48} slices={assetSlices} labels={assetLabels}
                  leaders="M740.5 836v5.5h-3M753 838v15.5h-3" />
                <SeriesLegend $left={19} $w={90}>
                  {assetLegend.map(([n, c]) => <Series key={n} $color={c}>{n}</Series>)}
                </SeriesLegend>
                <LegendScroll $h={71} />
              </PlotRow>
            </ChartPanel>
            <ChartPanel>
              <ChartTitle>关系类型组成</ChartTitle>
              <PlotRow $left={69.5} $top={18}>
                <PieChart x={1010} cx={1099} cy={790} r={48} slices={relationSlices} labels={relationLabels}
                  leaders="M1146.5 794v4.5h3M1143 805v4.5h3M1107 837.5v10h3" />
                <SeriesLegend $left={8} $w={102}>
                  {relationLegend.map(([n, c]) => <Series key={n} $color={c}>{n}</Series>)}
                </SeriesLegend>
                <LegendScroll $h={53} />
              </PlotRow>
            </ChartPanel>
          </Charts>
        </Page>
        <DevButton>
          <svg width="34" height="20" viewBox="0 0 34 20" fill="none" stroke="#fff" strokeWidth="3.4">
            <path d="M11.5 1.5 3 10l8.5 8.5M22.5 1.5 31 10l-8.5 8.5" />
          </svg>
        </DevButton>
      </Window>
    </Desktop>
  );
}
